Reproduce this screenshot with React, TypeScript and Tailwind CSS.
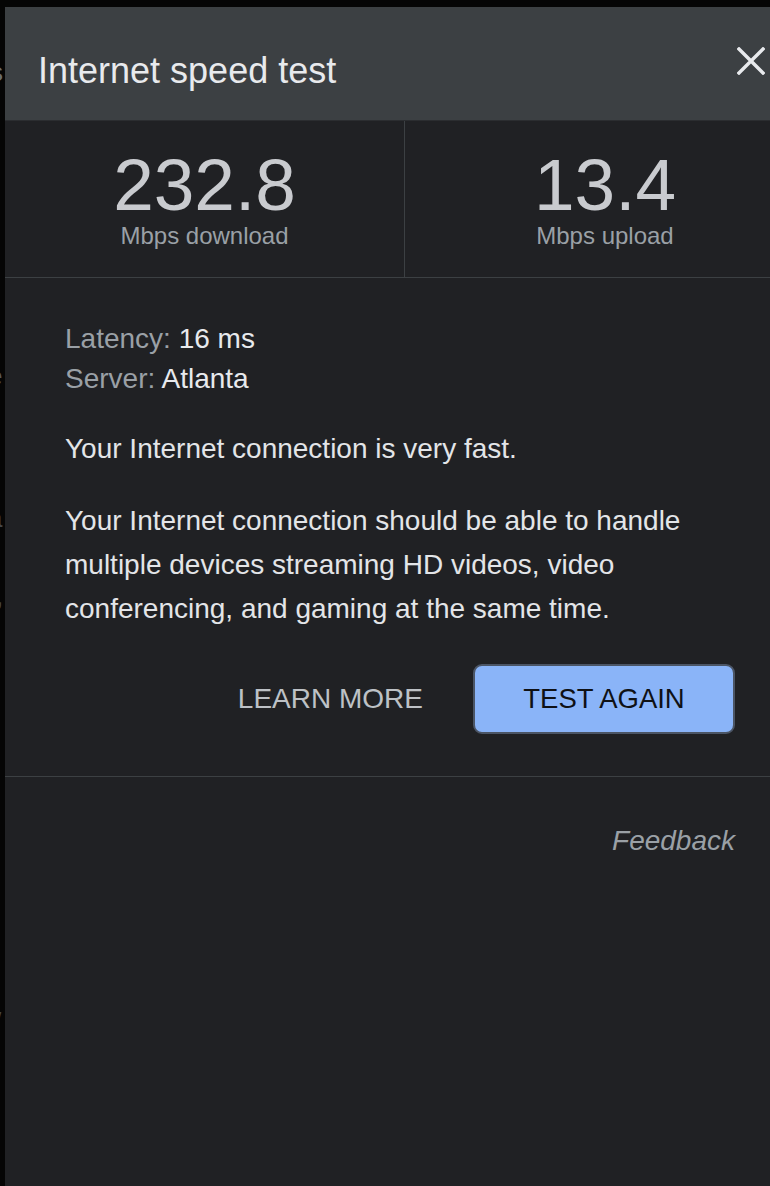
export default function App() {
  const font = { fontFamily: '"Liberation Sans", Arial, sans-serif' }

  return (
    <div className="w-[770px] h-[1186px] overflow-hidden bg-[#050505] flex flex-col" style={font}>
      {/* thin black strip above the dialog */}
      <div className="h-[7px] shrink-0" />
      <div className="flex flex-1 min-h-0">
        {/* page behind the dialog, only a sliver visible */}
        <div className="w-[5px] shrink-0 overflow-hidden flex flex-col text-[#6b6e72] text-[26px] leading-none">
          <span className="mt-[52px] -ml-[10px]">s</span>
          <span className="mt-[278px] -ml-[12px] text-[#55585c]">e</span>
          <span className="mt-[10px] -ml-[10px] text-[#44474b]">(</span>
          <span className="mt-[80px] -ml-[12px] text-[#44474b]">a</span>
          <span className="mt-[14px] -ml-[9px] text-[#44474b]">r</span>
          <span className="mt-[12px] -ml-[4px] text-[#44474b]">,</span>
          <span className="mt-[400px] -ml-[6px] text-[#44474b]">/</span>
        </div>

        {/* dialog */}
        <div className="w-[800px] shrink-0 bg-[#202124] flex flex-col">
          {/* header */}
          <div className="h-[114px] shrink-0 bg-[#3c4043] flex justify-between pl-[33px] pr-[40px] pt-[46px] border-b border-[#2b2d30]">
            <h1 className="text-[36px] leading-[36px] text-[#e8eaed]">Internet speed test</h1>
            <svg width="28" height="28" viewBox="0 0 28 28" className="mt-[-6px]">
              <path d="M2 2 L26 26 M26 2 L2 26" stroke="#e8eaed" strokeWidth="3.4" strokeLinecap="square" />
            </svg>
          </div>

          {/* stats */}
          <div className="grid grid-cols-2 border-b border-[#3c4043]">
            <div className="h-[156px] pt-[28px] flex flex-col items-center border-r border-[#3c4043]">
              <span className="text-[73px] leading-[72px] text-[#c9cbcf]">232.8</span>
              <span className="mt-[3px] text-[24px] leading-[24px] text-[#9aa0a6]">Mbps download</span>
            </div>
            <div className="h-[156px] pt-[28px] flex flex-col items-center">
              <span className="text-[73px] leading-[72px] text-[#c9cbcf]">13.4</span>
              <span className="mt-[3px] text-[24px] leading-[24px] text-[#9aa0a6]">Mbps upload</span>
            </div>
          </div>

          {/* details */}
          <div className="pl-[60px] pr-[70px] pt-[41px] text-[28px] text-[#e8eaed]">
            <div className="leading-[40px]">
              <div>
                <span className="text-[#9aa0a6]">Latency:</span> 16 ms
              </div>
              <div>
                <span className="text-[#9aa0a6]">Server:</span> Atlanta
              </div>
            </div>
            <p className="mt-[28px] leading-[44px] text-[#e3e5e8]">Your Internet connection is very fast.</p>
            <p className="mt-[28px] leading-[44px] text-[#e3e5e8]">
              Your Internet connection should be able to handle
              <br />
              multiple devices streaming HD videos, video
              <br />
              conferencing, and gaming at the same time.
            </p>

            <div className="mt-[33px] flex justify-end items-center gap-[50px]">
              <button className="text-[28px] leading-none text-[#bdc1c6]">LEARN MORE</button>
              <button className="w-[262px] h-[70px] rounded-[9px] bg-[#8ab4f8] border-2 border-[#4b5565] text-[27.5px] leading-none text-[#0f1115]">
                TEST AGAIN
              </button>
            </div>
          </div>

          <div className="mt-[42px] border-t border-[#3c4043]" />

          <div className="pr-[70px] pt-[44px] flex justify-end">
            <span className="text-[28px] leading-[40px] italic text-[#9aa0a6]">Feedback</span>
          </div>
        </div>
      </div>
    </div>
  )
}
